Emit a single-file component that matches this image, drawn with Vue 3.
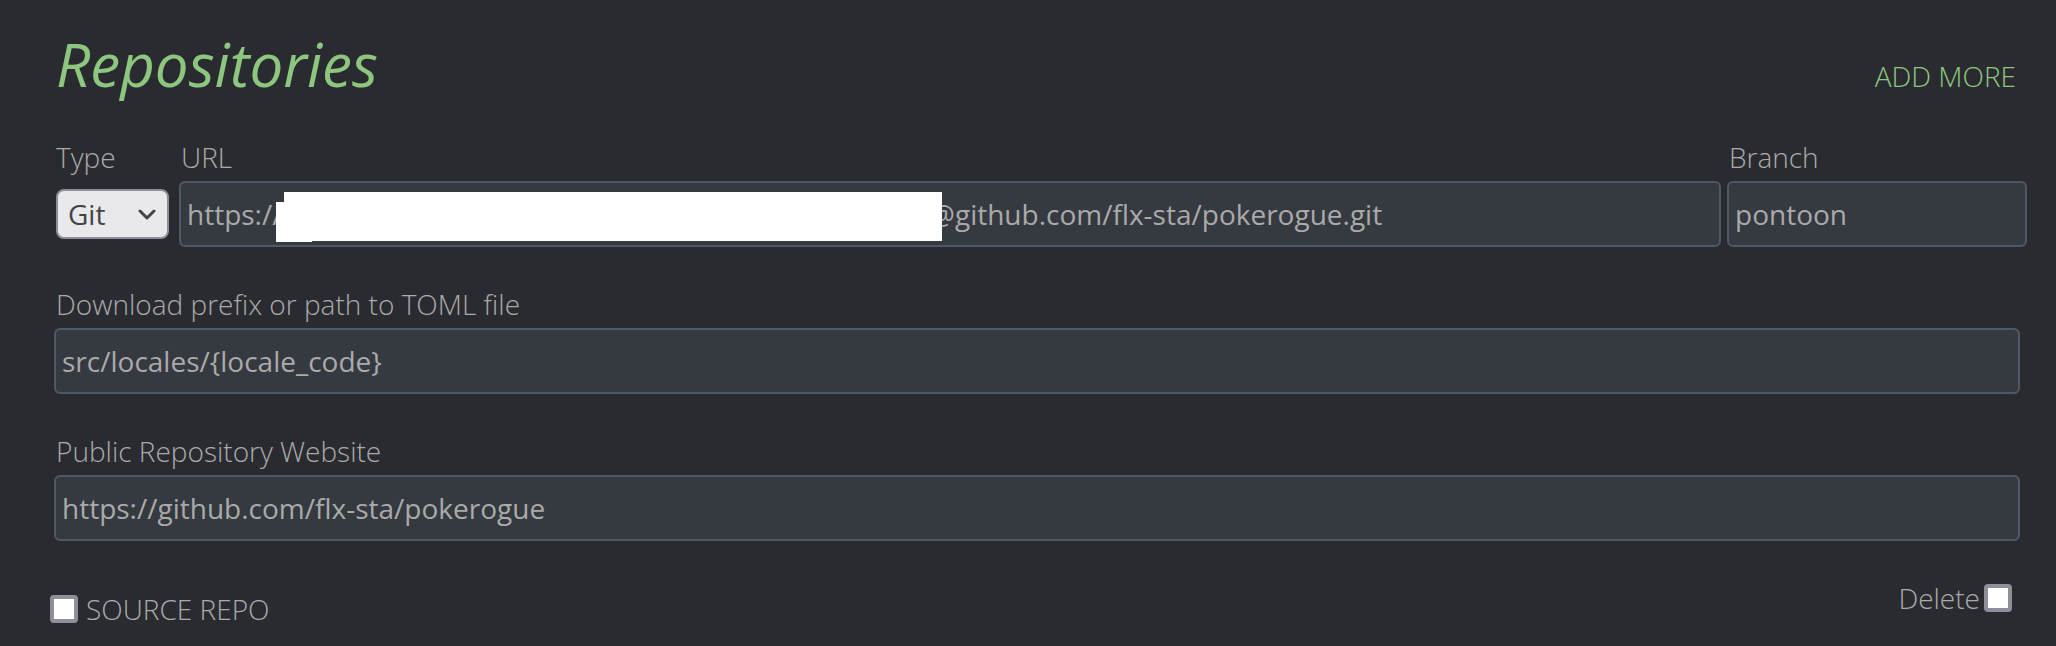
<script setup>
import { ref } from 'vue'

const type = ref('Git')
const url = ref('https://' + '\u00a0'.repeat(89) + '@github.com/flx-sta/pokerogue.git')
const branch = ref('pontoon')
const prefix = ref('src/locales/{locale_code}')
const website = ref('https://github.com/flx-sta/pokerogue')
const sourceRepo = ref(false)
const remove = ref(false)
</script>

<template>
  <form class="repositories" @submit.prevent>
    <header class="heading">
      <h1>Repositories</h1>
      <button type="button" class="add">ADD MORE</button>
    </header>

    <div class="fields">
      <div class="row">
        <div class="field">
          <label for="type">Type</label>
          <div class="select-box">
            <div class="select">
              <select id="type" v-model="type">
                <option>Git</option>
              </select>
              <svg class="chevron" viewBox="0 0 18 12" aria-hidden="true">
                <path d="M2 2l7 7 7-7" />
              </svg>
            </div>
          </div>
        </div>
        <div class="field url">
          <label for="url">URL</label>
          <div class="input-box">
            <input id="url" v-model="url" type="text" spellcheck="false" />
            <span class="mask mask-main"></span>
            <span class="mask mask-edge"></span>
          </div>
        </div>
        <div class="field branch">
          <label for="branch">Branch</label>
          <input id="branch" v-model="branch" type="text" />
        </div>
      </div>

      <div class="field">
        <label for="prefix">Download prefix or path to TOML file</label>
        <input id="prefix" v-model="prefix" type="text" />
      </div>

      <div class="field">
        <label for="website">Public Repository Website</label>
        <input id="website" v-model="website" type="text" />
      </div>
    </div>

    <footer class="options">
      <div class="option source">
        <input id="source" v-model="sourceRepo" type="checkbox" />
        <label for="source">SOURCE REPO</label>
      </div>
      <div class="option delete">
        <label for="delete">Delete</label>
        <input id="delete" v-model="remove" type="checkbox" />
      </div>
    </footer>
  </form>
</template>

<style>
body {
  background: #2a2b30;
}
</style>

<style scoped>
.repositories {
  padding: 21px 36px 16px 54px;
  color: #aaaaaa;
  font-family: "Open Sans", "Noto Sans", sans-serif;
  font-size: 28px;
  font-weight: 300;
  line-height: 38px;
}

.heading {
  display: flex;
  justify-content: space-between;
  align-items: baseline;
  margin-bottom: 31px;
}

h1 {
  margin: 0 0 0 2px;
  color: #8dc77f;
  font-size: 60px;
  font-style: italic;
  font-weight: 500;
  line-height: 86px;
}

.add {
  margin: 0 4px 0 0;
  padding: 0;
  border: 0;
  background: none;
  color: #8dc77f;
  font: inherit;
  cursor: pointer;
}

.fields {
  display: flex;
  flex-direction: column;
  gap: 38px;
}

.row {
  display: flex;
  margin-right: -7px;
}

.field {
  display: flex;
  flex-direction: column;
  gap: 5px;
}

.field > label {
  padding-left: 2px;
}

.url {
  flex: 1;
  margin: 0 6px 0 10px;
}

.branch {
  width: 300px;
}

input[type="text"] {
  box-sizing: border-box;
  display: block;
  width: 100%;
  height: 66px;
  margin: 0;
  padding: 12px 6px;
  border: 2px solid #4f5966;
  border-radius: 6px;
  outline: 0;
  background: #353940;
  color: #aaaaaa;
  font: inherit;
  font-weight: 400;
}

.input-box {
  position: relative;
}

.mask {
  position: absolute;
  background: #ffffff;
}

.mask-main {
  top: 11px;
  left: 105px;
  width: 658px;
  height: 49px;
}

.mask-edge {
  top: 21px;
  left: 97px;
  width: 36px;
  height: 40px;
}

.select-box {
  display: flex;
  align-items: center;
  height: 66px;
  padding-left: 2px;
}

.select {
  position: relative;
}

select {
  display: block;
  box-sizing: border-box;
  width: 113px;
  height: 50px;
  padding: 4px 10px;
  appearance: none;
  border: 2px solid #8f8f9c;
  border-radius: 8px;
  background: #e9e9eb;
  color: #444444;
  font: inherit;
  font-weight: 400;
}

.chevron {
  position: absolute;
  top: 20px;
  right: 13px;
  width: 18px;
  height: 12px;
  fill: none;
  stroke: #444444;
  stroke-width: 3;
  stroke-linecap: round;
  stroke-linejoin: round;
  pointer-events: none;
}

.options {
  display: flex;
  justify-content: space-between;
  align-items: flex-start;
  margin-top: 38px;
}

.option {
  display: flex;
  align-items: center;
}

.source {
  gap: 8px;
  margin: 11px 0 0 -4px;
}

.delete {
  gap: 4px;
  margin-right: 8px;
}

input[type="checkbox"] {
  box-sizing: border-box;
  width: 28px;
  height: 28px;
  margin: 0;
  appearance: none;
  border: 4px solid #8f8f9c;
  border-radius: 4px;
  background: #ffffff;
}

input[type="checkbox"]:checked {
  background: #8dc77f;
}
</style>
